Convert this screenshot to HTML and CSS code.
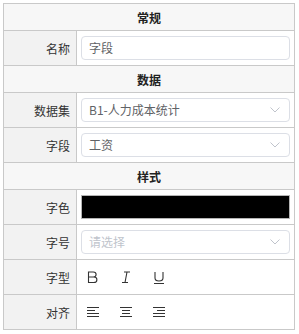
FILE: index.html
```html
<!DOCTYPE html>
<html>
<head>
<meta charset="utf-8">
<link rel="stylesheet" href="styles.css">
</head>
<body>
<table class="props">
  <colgroup><col class="col-label"><col class="col-value"></colgroup>
  <tr class="head"><td colspan="2">常规</td></tr>
  <tr>
    <td class="label">名称</td>
    <td class="value"><div class="input">字段</div></td>
  </tr>
  <tr class="head"><td colspan="2">数据</td></tr>
  <tr>
    <td class="label">数据集</td>
    <td class="value"><div class="input select"><span>B1-人力成本统计</span><svg class="chev" width="10" height="6" viewBox="0 0 10 6"><path d="M0.5 0.5 L5 5 L9.5 0.5" fill="none" stroke="#c0c4cc" stroke-width="1"/></svg></div></td>
  </tr>
  <tr>
    <td class="label">字段</td>
    <td class="value"><div class="input select"><span>工资</span><svg class="chev" width="10" height="6" viewBox="0 0 10 6"><path d="M0.5 0.5 L5 5 L9.5 0.5" fill="none" stroke="#c0c4cc" stroke-width="1"/></svg></div></td>
  </tr>
  <tr class="head"><td colspan="2">样式</td></tr>
  <tr>
    <td class="label">字色</td>
    <td class="value"><div class="color"></div></td>
  </tr>
  <tr>
    <td class="label">字号</td>
    <td class="value"><div class="input select placeholder"><span>请选择</span><svg class="chev" width="10" height="6" viewBox="0 0 10 6"><path d="M0.5 0.5 L5 5 L9.5 0.5" fill="none" stroke="#c0c4cc" stroke-width="1"/></svg></div></td>
  </tr>
  <tr>
    <td class="label">字型</td>
    <td class="value">
      <div class="tools">
        <svg class="tool" width="12" height="13" viewBox="0 0 12 13"><path d="M1.5 1 H6.3 C8.1 1 9.1 2 9.1 3.5 C9.1 5 8.1 6 6.3 6 H1.5 Z M1.5 6 H6.8 C8.8 6 9.9 7.1 9.9 8.7 C9.9 10.4 8.8 11.5 6.8 11.5 H1.5 Z" fill="none" stroke="#333" stroke-width="1.1"/></svg>
        <svg class="tool" width="12" height="13" viewBox="0 0 12 13"><path d="M4 1 H10 M2 11.5 H8 M7 1 L5 11.5" fill="none" stroke="#333" stroke-width="1.1"/></svg>
        <svg class="tool" width="12" height="13" viewBox="0 0 12 13"><path d="M2 1 V7 C2 9 3.3 10 6 10 C8.7 10 10 9 10 7 V1 M1 12.5 H11" fill="none" stroke="#333" stroke-width="1.1"/></svg>
      </div>
    </td>
  </tr>
  <tr>
    <td class="label">对齐</td>
    <td class="value">
      <div class="tools">
        <svg class="tool" width="12" height="12" viewBox="0 0 12 12"><path d="M0 1.5 H12 M0 4.5 H8 M0 7.5 H12 M0 10.5 H12" fill="none" stroke="#333" stroke-width="1"/></svg>
        <svg class="tool" width="12" height="12" viewBox="0 0 12 12"><path d="M0 1.5 H12 M2 4.5 H10 M2 7.5 H10 M0 10.5 H12" fill="none" stroke="#333" stroke-width="1"/></svg>
        <svg class="tool" width="12" height="12" viewBox="0 0 12 12"><path d="M0 1.5 H12 M4 4.5 H12 M0 7.5 H12 M0 10.5 H12" fill="none" stroke="#333" stroke-width="1"/></svg>
      </div>
    </td>
  </tr>
</table>
</body>
</html>
```

FILE: styles.css
```css
html, body {
  margin: 0;
  padding: 0;
  background: #fff;
}
body {
  padding: 3px 0 0 3px;
  font-family: "Noto Sans CJK SC", "Noto Sans", sans-serif;
  font-size: 12px;
  color: #333;
}
.props {
  border-collapse: collapse;
  width: 292px;
  table-layout: fixed;
}
.col-label {
  width: 73px;
}
.props td {
  border: 1px solid #c9c9c9;
  padding: 0;
}
.head td {
  height: 26px;
  background: #f7f7f7;
  text-align: center;
  font-weight: bold;
  color: #222;
}
.label {
  height: 34px;
  background: #f2f2f2;
  text-align: right;
  padding-right: 6px !important;
  color: #333;
}
.value {
  padding: 0 4px !important;
}
.input {
  box-sizing: border-box;
  height: 24px;
  border: 1px solid #dcdfe6;
  border-radius: 4px;
  padding: 0 7px;
  display: flex;
  align-items: center;
  justify-content: space-between;
  color: #606266;
  line-height: 22px;
}
.placeholder {
  color: #c0c4cc;
}
.chev {
  display: block;
  margin-right: 2px;
}
.color {
  box-sizing: border-box;
  height: 24px;
  border: 1px solid #b4b4b4;
  background: #000;
}
.tools {
  display: flex;
  align-items: center;
  gap: 21px;
  padding-left: 6px;
}
.tool {
  display: block;
}
```
